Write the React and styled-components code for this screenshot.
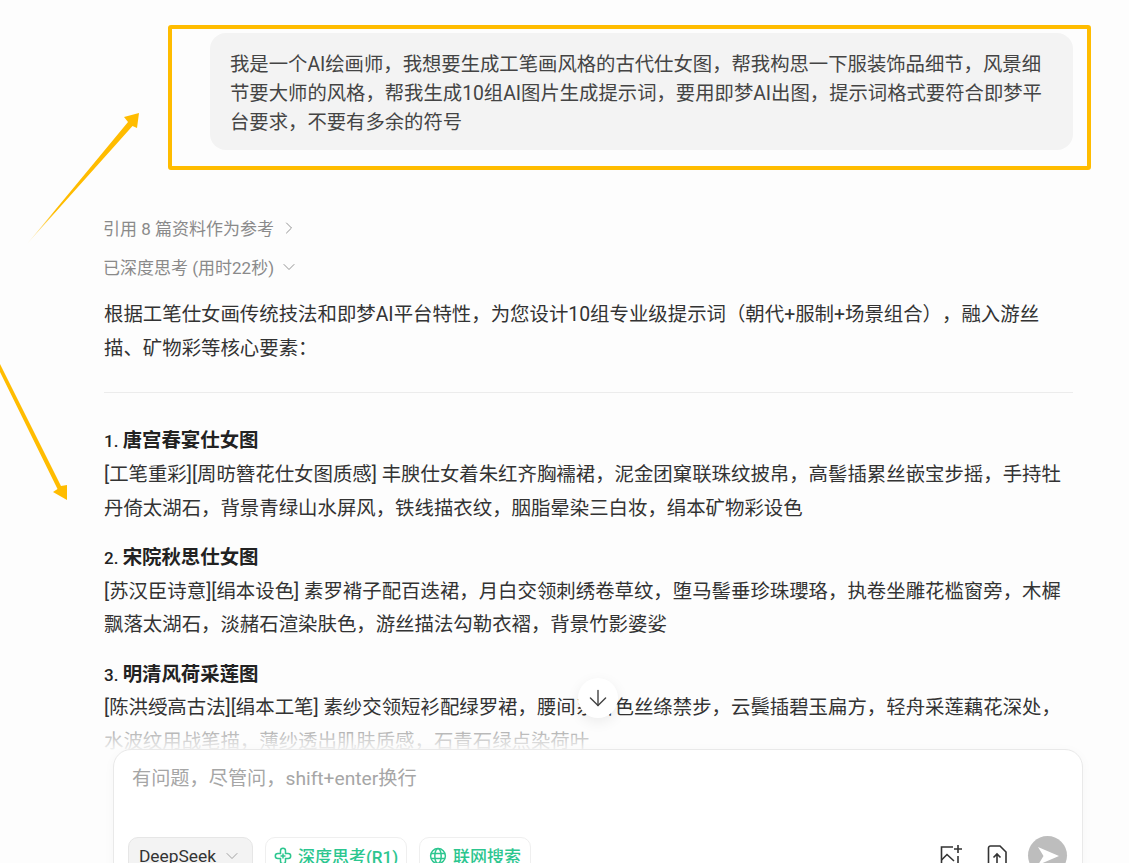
import React from 'react';
import styled, { createGlobalStyle } from 'styled-components';
import { ArrowDown, ChevronDown, ChevronRight } from 'lucide-react';

const FONT = 'Roboto, "Noto Sans CJK SC", "Noto Sans", sans-serif';

const Global = createGlobalStyle`
html, body { margin: 0; padding: 0; background: #fdfdfd; }
* { box-sizing: border-box; }
`;

const Page = styled.div`
position: relative;
height: 863px;
overflow: hidden;
background: #fdfdfd;
font-family: ${FONT};
color: #333;
text-spacing-trim: space-all;
`;

const Chat = styled.div`
padding: 33px 56px 0 104px;
`;

const Bubble = styled.div`
margin-left: 106px;
padding: 17px 20px 13px;
background: #f3f3f3;
border-radius: 16px;
font-size: 19.35px;
line-height: 29px;
color: #444;
`;

const MetaRow = styled.div`
display: flex;
align-items: center;
gap: 5px;
height: 39px;
font-size: 17px;
color: #8a8a8a;
margin-left: -1px;
`;

const Sources = styled(MetaRow)`
margin-top: 58px;
`;

const Paragraph = styled.p`
margin: 0;
font-size: 19.42px;
line-height: 33.7px;
`;

const Intro = styled(Paragraph)`
margin-top: 12px;
`;

const Divider = styled.hr`
margin: 27px 0 31px;
border: 0;
border-top: 1px solid #ececec;
`;

const Section = styled.section`
margin-bottom: 15.5px;
`;

const Heading = styled.div`
height: 33.7px;
font-size: 19.42px;
line-height: 33.7px;
font-weight: 700;
color: #222;
`;

const HeadingNumber = styled.span`
font-size: 17px;
line-height: 1;
font-weight: 500;
`;

const Fade = styled.div`
position: absolute;
left: 0;
right: 0;
top: 724px;
height: 26px;
background: linear-gradient(rgba(253, 253, 253, 0.5), rgba(253, 253, 253, 0.95));
`;

const ScrollButton = styled.button`
position: absolute;
left: 578px;
top: 678px;
width: 40px;
height: 40px;
padding: 0;
display: flex;
align-items: center;
justify-content: center;
border: 0;
border-radius: 50%;
background: #fff;
color: #444;
box-shadow: 0 4px 14px rgba(0, 0, 0, 0.07);
`;

const Composer = styled.div`
position: absolute;
left: 113px;
top: 749px;
width: 970px;
height: 150px;
padding: 17px 15px 0 14px;
background: #fff;
border: 1px solid #e9e9e9;
border-radius: 18px;
box-shadow: 0 2px 12px rgba(0, 0, 0, 0.03);
`;

const Placeholder = styled.div`
padding-left: 4px;
font-size: 19.2px;
line-height: 24px;
color: #a6a6a6;
`;

const Toolbar = styled.div`
display: flex;
align-items: center;
gap: 12px;
margin-top: 45px;
`;

const Pill = styled.div`
display: flex;
align-items: center;
justify-content: center;
gap: 6px;
width: ${(p) => p.$width}px;
height: 38px;
border-radius: 10px;
border: 1px solid ${(p) => (p.$muted ? '#e6e6e6' : '#efefef')};
background: ${(p) => (p.$muted ? '#f3f3f3' : '#fff')};
color: ${(p) => (p.$muted ? '#333' : '#2cc68f')};
font-size: ${(p) => (p.$muted ? 17.4 : 17)}px;
font-weight: ${(p) => (p.$muted ? 400 : 500)};
white-space: nowrap;
`;

const Actions = styled.div`
display: flex;
align-items: center;
margin-left: auto;
color: #333;
`;

const ActionIcon = styled.svg`
display: block;
margin-right: ${(p) => p.$gap}px;
`;

const Send = styled.div`
width: 39px;
height: 39px;
display: flex;
align-items: center;
justify-content: center;
border-radius: 50%;
background: #bdbdbd;
`;

const Frame = styled.div`
position: absolute;
left: 168px;
top: 25px;
width: 923px;
height: 145px;
border: 4px solid #ffbc00;
border-radius: 3px;
`;

const Arrows = styled.svg`
position: absolute;
left: 0;
top: 0;
`;

const sections = [
  {
    title: '唐宫春宴仕女图',
    text: '[工笔重彩][周昉簪花仕女图质感] 丰腴仕女着朱红齐胸襦裙，泥金团窠联珠纹披帛，高髻插累丝嵌宝步摇，手持牡丹倚太湖石，背景青绿山水屏风，铁线描衣纹，胭脂晕染三白妆，绢本矿物彩设色',
  },
  {
    title: '宋院秋思仕女图',
    text: '[苏汉臣诗意][绢本设色] 素罗褙子配百迭裙，月白交领刺绣卷草纹，堕马髻垂珍珠瓔珞，执卷坐雕花槛窗旁，木樨飘落太湖石，淡赭石渲染肤色，游丝描法勾勒衣褶，背景竹影婆娑',
  },
  {
    title: '明清风荷采莲图',
    text: '[陈洪绶高古法][绢本工笔] 素纱交领短衫配绿罗裙，腰间系杏色丝绦禁步，云鬓插碧玉扁方，轻舟采莲藕花深处，水波纹用战笔描，薄纱透出肌肤质感，石青石绿点染荷叶',
  },
];

const CloverIcon = () => (
  <svg width="18" height="18" viewBox="0 0 18 18" fill="none" stroke="currentColor" strokeWidth="1.5">
    <path d="M6.500 6.500V3.800a2.500 2.500 0 0 1 5 0v2.700h2.700a2.500 2.500 0 0 1 0 5h-2.700v2.700a2.500 2.500 0 0 1-5 0v-2.700H3.800a2.500 2.500 0 0 1 0-5z" />
    <path d="M9 6.500v5M6.500 9h5" />
  </svg>
);

const GlobeIcon = () => (
  <svg width="18" height="18" viewBox="0 0 18 18" fill="none" stroke="currentColor" strokeWidth="1.5">
    <circle cx="9" cy="9" r="7.400" />
    <ellipse cx="9" cy="9" rx="3.200" ry="7.400" />
    <path d="M2 6.500h14M2 11.500h14" />
  </svg>
);

const PictureAddIcon = () => (
  <ActionIcon $gap={22} width="24" height="24" viewBox="0 0 24 24" fill="none" stroke="currentColor" strokeWidth="1.6">
    <path d="M14 3H2.500v18.500H19V12" />
    <path d="M2.500 16 8 10.500 15 17M19 1v8M15 5h8" />
  </ActionIcon>
);

const FileUploadIcon = () => (
  <ActionIcon $gap={19} width="24" height="24" viewBox="0 0 24 24" fill="none" stroke="currentColor" strokeWidth="1.6">
    <path d="M3.500 4a2 2 0 0 1 2-2H15l6 6v14H3.500z" />
    <path d="M12 19v-9M8.500 13.500 12 10l3.500 3.500" />
  </ActionIcon>
);

const SendIcon = () => (
  <svg width="26" height="26" viewBox="0 0 26 26">
    <path d="M3 4 24 13 3 22 8.500 13z" fill="#fff" />
  </svg>
);

const App = () => (
  <Page>
    <Global />
    <Chat>
      <Bubble>
        我是一个AI绘画师，我想要生成工笔画风格的古代仕女图，帮我构思一下服装饰品细节，风景细节要大师的风格，帮我生成10组AI图片生成提示词，要用即梦AI出图，提示词格式要符合即梦平台要求，不要有多余的符号
      </Bubble>
      <Sources>
        引用 8 篇资料作为参考
        <ChevronRight size={20} strokeWidth={1.1} />
      </Sources>
      <MetaRow>
        已深度思考 (用时22秒)
        <ChevronDown size={20} strokeWidth={1.1} />
      </MetaRow>
      <Intro>
        根据工笔仕女画传统技法和即梦AI平台特性，为您设计10组专业级提示词（朝代+服制+场景组合），融入游丝
        <br />
        描、矿物彩等核心要素：
      </Intro>
      <Divider />
      {sections.map((s, i) => (
        <Section key={s.title}>
          <Heading><HeadingNumber>{i + 1}. </HeadingNumber>{s.title}</Heading>
          <Paragraph>{s.text}</Paragraph>
        </Section>
      ))}
    </Chat>
    <Fade />
    <ScrollButton>
      <ArrowDown size={26} strokeWidth={1.3} />
    </ScrollButton>
    <Composer>
      <Placeholder>有问题，尽管问，shift+enter换行</Placeholder>
      <Toolbar>
        <Pill $muted $width={125}>
          DeepSeek
          <ChevronDown size={20} strokeWidth={1.1} color="#999" />
        </Pill>
        <Pill $width={142}>
          <CloverIcon />
          深度思考(R1)
        </Pill>
        <Pill $width={112}>
          <GlobeIcon />
          联网搜索
        </Pill>
        <Actions>
          <PictureAddIcon />
          <FileUploadIcon />
          <Send><SendIcon /></Send>
        </Actions>
      </Toolbar>
    </Composer>
    <Frame />
    <Arrows width="1129" height="863" viewBox="0 0 1129 863">
      <defs>
        <linearGradient id="fadeUp" x1="27" y1="244" x2="139" y2="113" gradientUnits="userSpaceOnUse">
          <stop offset="0" stopColor="#ffbc00" stopOpacity="0.1" />
          <stop offset="0.25" stopColor="#ffbc00" />
        </linearGradient>
      </defs>
      <path d="M27 244 128 122 124 117 139 113 137 128 132.500 126z" fill="url(#fadeUp)" />
      <path d="M0 364 61 486 67 485 67 500 53 492 57.500 489 0 372z" fill="#ffbc00" />
    </Arrows>
  </Page>
);

export default App;
